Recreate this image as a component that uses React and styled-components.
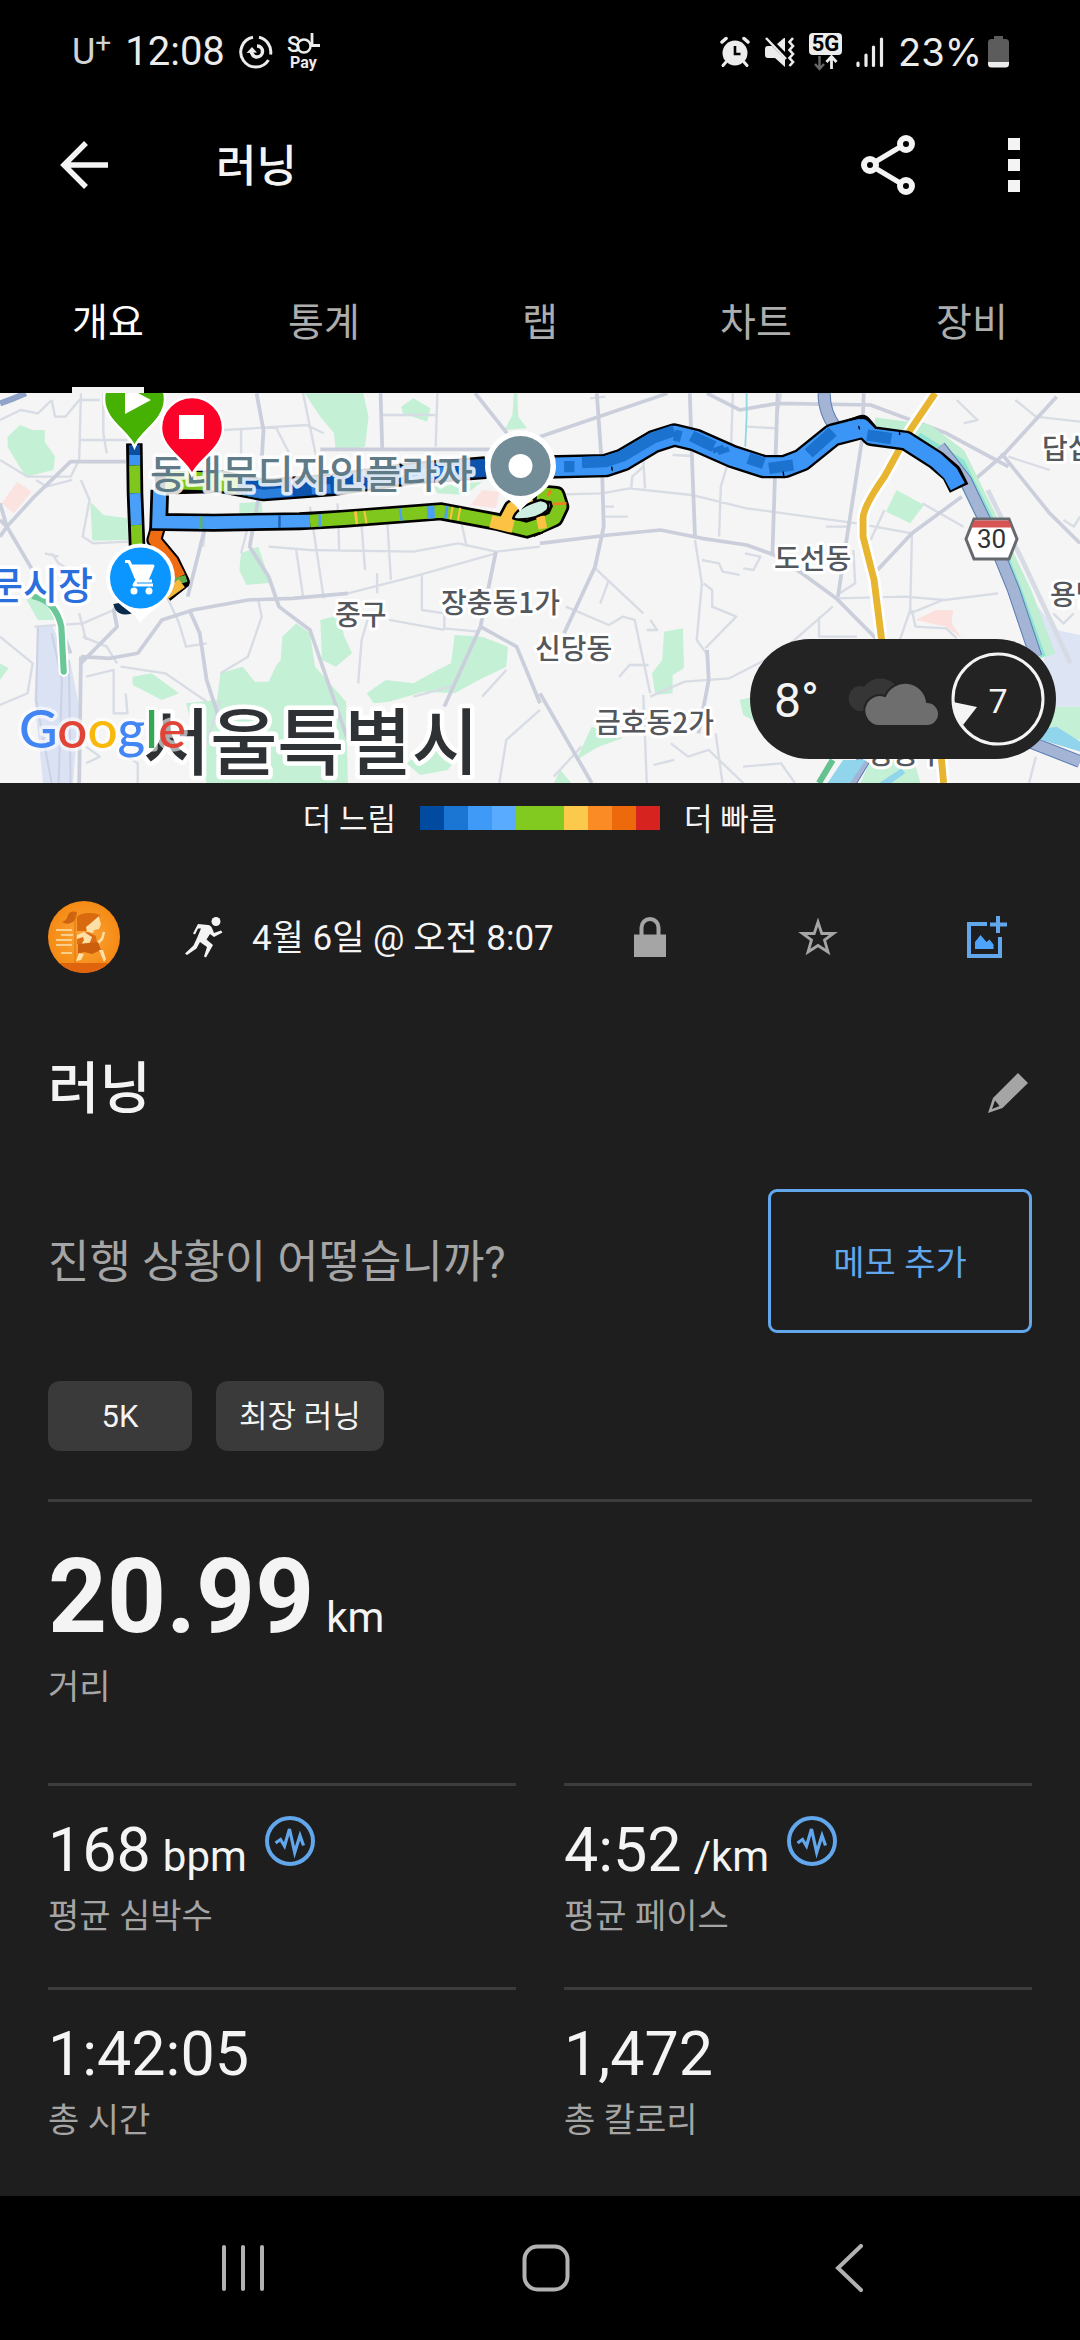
import React from "react";
import styled, { createGlobalStyle } from "styled-components";

const color = {
  bg: "#1e1e1e",
  black: "#000000",
  text: "#f4f4f4",
  muted: "#a5a5a5",
  line: "#3c3c3c",
  chip: "#3a3a3a",
  blue: "#62a6ec",
};

const GlobalStyle = createGlobalStyle`
  *, *::before, *::after { box-sizing: border-box; }
  body {
    margin: 0;
    background: ${color.bg};
    color: ${color.text};
    font-family: Roboto, "Noto Sans CJK KR", sans-serif;
    font-size: 36px;
  }
  button { font: inherit; color: inherit; background: none; border: 0; padding: 0; margin: 0; cursor: pointer; }
  h1, h2, p, dl, dt, dd, ul { margin: 0; padding: 0; font-weight: inherit; }
  svg { display: block; flex: none; }
`;

const Screen = styled.div`
  display: flex;
  flex-direction: column;
  min-height: 100vh;
`;

const TopArea = styled.header`
  background: ${color.black};
`;

/* ---------- status bar ---------- */

const StatusBar = styled.div`
  display: flex;
  align-items: center;
  justify-content: space-between;
  height: 104px;
  padding: 0 71px 0 72px;
  color: #ececec;
  font-size: 40px;
  line-height: 48px;
`;

const StatusGroup = styled.div`
  display: flex;
  align-items: center;
  gap: 14px;
`;

const Carrier = styled.span`
  color: #d2d2d2;
  font-size: 36px;

  sup {
    font-size: 28px;
    line-height: 1;
    vertical-align: 12px;
  }
`;

const BatteryGroup = styled.span`
  display: flex;
  align-items: center;
  gap: 6px;
  font-family: Inter, Roboto, sans-serif;
  font-size: 38px;
`;

/* ---------- app bar and tabs ---------- */

const AppBar = styled.div`
  display: flex;
  align-items: center;
  height: 122px;
  padding: 0 36px 0 48px;
`;

const IconButton = styled.button`
  display: flex;
  align-items: center;
  justify-content: center;
  width: ${(p) => p.$width || 72}px;
  height: 72px;
`;

const AppTitle = styled.h1`
  flex: 1;
  margin-left: 96px;
  padding-top: 4px;
  font-size: 44px;
  font-weight: 500;
  line-height: 48px;
`;

const AppActions = styled.div`
  display: flex;
  gap: 60px;
`;

const Tabs = styled.nav`
  display: grid;
  grid-template-columns: repeat(5, 1fr);
  padding-top: 73px;
`;

const Tab = styled.button`
  display: flex;
  justify-content: center;
  color: ${(p) => (p.$active ? "#ffffff" : "#adadad")};
  font-size: 39px;
  line-height: 48px;

  span {
    min-width: 72px;
    padding-bottom: 40px;
    border-bottom: 6px solid ${(p) => (p.$active ? "#f4f4f4" : "transparent")};
  }
`;

/* ---------- map ---------- */

const MapPanel = styled.section`
  position: relative;
  height: 390px;
  overflow: hidden;
  background: #f5f5f5;

  > svg { width: 100%; height: 100%; }
`;

const WeatherPill = styled.div`
  position: absolute;
  right: 24px;
  bottom: 24px;
  display: flex;
  align-items: center;
  width: 306px;
  height: 120px;
  padding: 0 11px 0 24px;
  border-radius: 60px;
  background: #232323;
`;

const Temperature = styled.span`
  flex: 1;
  padding-top: 4px;
  font-size: 48px;
  line-height: 56px;
`;

const Wind = styled.span`
  position: relative;
  display: flex;
  align-items: center;
  justify-content: center;
  width: 94px;
  height: 94px;
  margin-left: 12px;
  padding-top: 4px;
  font-size: 34px;

  svg { position: absolute; inset: 0; }
`;

/* ---------- legend ---------- */

const Legend = styled.div`
  display: flex;
  align-items: center;
  justify-content: center;
  gap: 24px;
  height: 70px;
  font-size: 31px;
  line-height: 40px;

  span { padding-top: 4px; }
`;

const Scale = styled.div`
  display: flex;
`;

const Swatch = styled.i`
  width: 24px;
  height: 24px;
  background: ${(p) => p.$color};
`;

/* ---------- activity ---------- */

const Content = styled.main`
  display: flex;
  flex-direction: column;
  padding: 48px 48px 0;
`;

const ActivityRow = styled.div`
  display: flex;
  align-items: center;
  height: 72px;
  margin-right: -38px;
`;

const ActivityMeta = styled.div`
  display: flex;
  flex: 1;
  align-items: center;
  gap: 28px;
  margin-left: 64px;
  font-size: 35px;
  line-height: 48px;
  white-space: nowrap;

  span { padding-top: 4px; }
`;

const TitleRow = styled.div`
  display: flex;
  align-items: center;
  justify-content: space-between;
  height: 144px;
  margin: 48px 0 24px;
`;

const Title = styled.h2`
  padding-bottom: 8px;
  font-size: 56px;
  font-weight: 500;
  line-height: 64px;
`;

const NoteRow = styled.div`
  display: flex;
  align-items: center;
  justify-content: space-between;
`;

const Question = styled.p`
  padding-top: 4px;
  color: ${color.muted};
  font-size: 45px;
  line-height: 56px;
`;

const NoteButton = styled.button`
  width: 264px;
  height: 144px;
  padding-top: 4px;
  border: 3px solid ${color.blue};
  border-radius: 9px;
  color: ${color.blue};
  font-size: 34px;
  line-height: 40px;
`;

const Chips = styled.ul`
  display: flex;
  gap: 24px;
  padding: 48px 0;
  list-style: none;
`;

const Chip = styled.li`
  min-width: 144px;
  padding: 16px 23px 14px;
  border-radius: 12px;
  background: ${color.chip};
  font-size: 31px;
  line-height: 40px;
  text-align: center;
`;

/* ---------- metrics ---------- */

const Metrics = styled.dl`
  display: grid;
  grid-template-columns: 1fr 1fr;
  column-gap: 48px;
`;

const Metric = styled.div`
  display: flex;
  flex-direction: column-reverse;
  grid-column: ${(p) => (p.$hero ? "1 / -1" : "auto")};
  gap: 10px;
  padding: ${(p) => (p.$hero ? "35px 0 76px" : "28px 0 51px")};
  border-top: 3px solid ${color.line};
`;

const MetricLabel = styled.dt`
  color: ${color.muted};
  font-size: 34px;
  line-height: 40px;
`;

const MetricValue = styled.dd`
  display: flex;
  align-items: flex-start;
  gap: 18px;
  font-size: ${(p) => (p.$hero ? 103 : 61)}px;
  font-weight: ${(p) => (p.$hero ? 700 : 400)};
  line-height: ${(p) => (p.$hero ? 120 : 72)}px;
`;

const Unit = styled.span`
  margin-left: 12px;
  font-size: 42px;
  font-weight: 400;
  line-height: 1;
`;

/* ---------- system navigation ---------- */

const SystemNav = styled.nav`
  display: grid;
  grid-template-columns: repeat(3, 1fr);
  align-items: center;
  justify-items: center;
  height: 144px;
  margin-top: auto;
  padding: 0 80px 0 92px;
  background: ${color.black};
`;

/* ---------- status icons ---------- */

const SwirlIcon = () => (
  <svg width="34" height="34" viewBox="0 0 34 34" fill="none" stroke="#ececec">
    <path d="M20 2.3A15 15 0 0 1 31.6 19.500M29.500 25A15 15 0 1 1 14 2.300" strokeWidth="3" />
    <path d="M12 16c1 4 3 6 6 6s5.500-2.500 5.500-5.500-2-5.500-5.500-5.500" strokeWidth="3.500" />
    <path d="M7.500 18l5.500-6 5 5.500z" fill="#ececec" stroke="none" />
  </svg>
);

const SolIcon = () => (
  <svg width="34" height="42" viewBox="0 0 34 42" fill="#ececec" fontFamily="Roboto, sans-serif">
    <text x="0" y="21" fontSize="22" fontWeight="500">S</text>
    <circle cx="17" cy="15" r="6.500" fill="none" stroke="#ececec" strokeWidth="2.400" />
    <path d="M25 2v12.500H33" fill="none" stroke="#ececec" strokeWidth="2.800" />
    <text x="3" y="37" fontSize="16" fontWeight="700">Pay</text>
  </svg>
);

const AlarmIcon = () => (
  <svg width="30" height="32" viewBox="0 0 30 32" fill="none" stroke="#ececec" strokeLinecap="round">
    <circle cx="15" cy="17" r="12.500" fill="#ececec" stroke="none" />
    <path d="M2 6l4-3.500M28 6l-4-3.500" strokeWidth="3.500" />
    <path d="M6 26l-3 3.500M24 26l3 3.500" strokeWidth="3" />
    <path d="M15 10v8h5.500" stroke="#000" strokeWidth="2.600" strokeLinecap="butt" />
  </svg>
);

const MuteIcon = () => (
  <svg width="31" height="32" viewBox="0 0 31 32" fill="#ececec">
    <path d="M1 13c0-2 1-3 3-3h4l13 13v8L11 22H4c-2 0-3-1-3-3zM13 8l7-6h1v14z" />
    <path d="M2 2l20 21" stroke="#ececec" strokeWidth="2.500" />
    <path d="M29 2l-3.500 4 3.500 4-3.500 4 3.500 4-3.500 4 3.500 4-3.500 4" fill="none" stroke="#ececec" strokeWidth="2.600" />
  </svg>
);

const NetworkIcon = () => (
  <svg width="33" height="40" viewBox="0 0 33 40" fill="none">
    <rect x="0" y="1" width="33" height="22" rx="4" fill="#ececec" />
    <text x="16.500" y="18.500" fill="#000" fontFamily="Roboto, sans-serif" fontSize="22" fontWeight="700" textAnchor="middle">5G</text>
    <path d="M10.500 24v12M6 32l4.500 5 4.500-5" stroke="#666" strokeWidth="2.500" />
    <path d="M22.500 37V25M17.500 30l5-5.500 5 5.500" stroke="#ececec" strokeWidth="2.800" />
  </svg>
);

const SignalIcon = () => (
  <svg width="28" height="32" viewBox="0 0 28 32" stroke="#ececec" strokeWidth="3.200" strokeLinecap="round">
    <path d="M2 27v2.500M10 19v10.500M17.500 11v18.500M25.500 3v26.500" />
  </svg>
);

const BatteryIcon = () => (
  <svg width="21" height="32" viewBox="0 0 21 32">
    <path d="M6 0h9v3h2.500A3.500 3.500 0 0 1 21 6.500V26H0V6.500A3.500 3.500 0 0 1 3.500 3H6z" fill="#5c5c5c" />
    <path d="M0 26h21v2a3.500 3.500 0 0 1-3.500 3.500h-14A3.500 3.500 0 0 1 0 28z" fill="#ececec" />
  </svg>
);

/* ---------- action icons ---------- */

const BackArrowIcon = () => (
  <svg width="48" height="48" viewBox="0 0 48 48" fill="none" stroke={color.text} strokeWidth="5.500">
    <path d="M48 24H4M26 2L4 24l22 22" />
  </svg>
);

const ShareIcon = () => (
  <svg width="56" height="62" viewBox="0 0 56 62" fill="none" stroke={color.text}>
    <path d="M10 31L46 9.500M10 31l36 21.500" strokeWidth="5" />
    <g fill="#000" strokeWidth="6">
      <circle cx="10" cy="31" r="6" />
      <circle cx="46" cy="10" r="6" />
      <circle cx="46" cy="52" r="6" />
    </g>
  </svg>
);

const MoreIcon = () => (
  <svg width="12" height="54" viewBox="0 0 12 54" fill={color.text}>
    <path d="M0 0h12v12H0zM0 21h12v12H0zM0 42h12v12H0z" />
  </svg>
);

const Avatar = () => (
  <svg width="72" height="72" viewBox="0 0 72 72" role="img" aria-label="프로필">
    <defs>
      <radialGradient id="avatarGlow" cx="50%" cy="50%" r="50%">
        <stop offset="0" stopColor="#fba63a" />
        <stop offset="1" stopColor="#f58a14" />
      </radialGradient>
      <clipPath id="avatarClip"><circle cx="36" cy="36" r="36" /></clipPath>
    </defs>
    <g clipPath="url(#avatarClip)">
      <rect width="72" height="72" fill="url(#avatarGlow)" />
      <rect y="62" width="72" height="10" fill="#e0640e" />
      <path d="M8 29h16M13 34h12M8 39h16M8 44h16M13 52h11" stroke="#fdd08a" strokeWidth="2" />
      <path d="M29 30V16c4-5 17-5 23-2l-1 5-8 3-3 8z" fill="#d96a10" />
      <path d="M29 12c-3-3-8-1-9 2-1 4-3 6-6 7 5 3 11 2 14-4z" fill="#cf6410" />
      <path d="M43 22l8-7 1 5 1 3-2 5-5 1-1 3-6-1-1-5z" fill="#fde0a6" />
      <path d="M29 34l11-3 8 4 1 7-10 3-10-2z" fill="#dd6c12" />
      <path d="M29 34l7-3 8 5-3 8-5 2-3-2 3-5-1-3-6 2z" fill="#fde0a6" />
      <path d="M50 42l4-4 2-7" stroke="#fde0a6" strokeWidth="2.500" fill="none" />
      <path d="M30 43l20-2 3 8-9 4-8-2-6 2z" fill="#cc5f0d" />
      <path d="M31 52l5 1-3 6-5 1zM51 49l4 0 3 9-2 3z" fill="#fde0a6" />
      <path d="M27 13v50" stroke="#dc7415" strokeWidth="1" />
    </g>
  </svg>
);

const RunnerIcon = () => (
  <svg width="40" height="42" viewBox="0 0 40 42" fill={color.text}>
    <circle cx="32" cy="5.500" r="4.500" />
    <path d="M14 8l10 1c2 .3 3 1.300 4 3l2 5 7-2.500 1.500 2L30 21l-4-3-3.500 5.500L29 29l-7 12.500-2-1L23 31l-7-5-3.500 6.500L3 39l-2-1.500 8.500-8L13 22l4-9.500h-3l-3 6-2-1z" />
  </svg>
);

const LockIcon = () => (
  <svg width="32" height="42" viewBox="0 0 32 42" fill={color.muted}>
    <path d="M0 18.500h32V41H0z" />
    <path d="M7.500 20v-8.500a8.500 8.500 0 0 1 17 0V20" fill="none" stroke={color.muted} strokeWidth="4" />
  </svg>
);

const StarIcon = () => (
  <svg width="40" height="40" viewBox="0 0 40 40" fill="none" stroke={color.muted} strokeWidth="2.800">
    <path d="M20 5l3.800 11.500H35.500L26.500 23l3.500 12L20 28.500 10 35l3.500-12L4.500 16.500h11.700z" />
  </svg>
);

const AddPhotoIcon = () => (
  <svg width="42" height="42" viewBox="0 0 42 42" fill="none" stroke={color.blue} strokeWidth="4">
    <path d="M22 8H4v32h31V21" />
    <path d="M33 0v17M25 8.500h17" />
    <path d="M10 33v-7l5.500-7 6 7 3-2.500 4 5V33z" fill="#4ea3fb" stroke="none" />
  </svg>
);

const PencilIcon = () => (
  <svg width="40" height="42" viewBox="0 0 40 42" fill={color.muted}>
    <path fillRule="evenodd" d="M30 1l10 10-25.500 25L0 41l5-15zM7 28.500L4 37l7.500-3z" />
  </svg>
);

const PulseIcon = () => (
  <svg width="50" height="54" viewBox="0 0 50 54" fill="none" stroke={color.blue}>
    <circle cx="25" cy="27" r="23" strokeWidth="4" />
    <path d="M10.500 29l5-3.500L19.500 32l5-17 5.200 23.500L35 21.500l3.500 10" strokeWidth="3.200" />
  </svg>
);

const RecentsIcon = () => (
  <svg width="44" height="48" viewBox="0 0 44 48" stroke="#b2b2b2" strokeWidth="4" strokeLinecap="round">
    <path d="M3 3v42M22 3v42M41 3v42" />
  </svg>
);

const HomeIcon = () => (
  <svg width="48" height="48" viewBox="0 0 48 48" fill="none" stroke="#b2b2b2" strokeWidth="4">
    <rect x="2.500" y="2.500" width="43" height="43" rx="13" />
  </svg>
);

const NavBackIcon = () => (
  <svg width="28" height="48" viewBox="0 0 28 48" fill="none" stroke="#b2b2b2" strokeWidth="4" strokeLinecap="round">
    <path d="M26 2L3 24l23 22" />
  </svg>
);

const CloudsIcon = () => (
  <svg width="94" height="53" viewBox="0 0 94 53">
    <path d="M13 38a13 13 0 0 1 0-25c2 0 4 0 6 1a20 20 0 0 1 34 2L40 38z" fill="#363636" />
    <path d="M33 53a15.500 15.500 0 1 1 7-30 22 22 0 0 1 42 6 12 12 0 0 1 0 24z" fill="#6e6e6e" stroke="#232323" strokeWidth="2" />
  </svg>
);

const WindDial = () => (
  <svg width="94" height="94" viewBox="0 0 94 94">
    <circle cx="47" cy="47" r="45" fill="none" stroke={color.text} strokeWidth="3" />
    <path d="M2 50l24 5-14 18C6 66 3 58 2 50z" fill={color.text} />
  </svg>
);

/* ---------- map drawing ---------- */

const parksWest =
  "M22 170L58 135 95 150 130 150 130 185 160 230 155 270 75 290 45 240 22 200z" +
  "M262 365L300 405 370 415 372 480 268 482z" +
  "M885 40L1055 40 1070 110 1060 200 975 215 970 160 930 110z" +
  "M1165 80L1200 55 1250 85 1240 125 1170 100z" +
  "M1492 40L1502 40 1505 110 1530 145 1465 150 1488 105z" +
  "M695 370L760 365 765 440 695 430z" +
  "M700 520L750 500 770 560 790 608 715 615 695 570z" +
  "M930 720L985 705 1000 770 1022 820 975 860 935 840z" +
  "M540 970L630 960 640 880 705 860 740 905 780 905 800 860 815 840 820 770 860 730 900 760 915 860 1005 965 1010 1209 600 1209 570 1090z" +
  "M385 890L440 880 520 940 470 960 385 915z" +
  "M1065 940L1120 900 1200 910 1270 870 1310 850 1320 765 1400 770 1475 800 1470 860 1390 900 1320 940 1230 935 1130 965 1085 970z" +
  "M1180 1150L1250 1100 1330 1130 1300 1170 1220 1185z" +
  "M0 850L25 865 0 900zM1260 320L1400 305 1350 345 1270 340zM50 610L140 660 160 720 110 720z";

const majorWest =
  "M0 420L20 440 95 355 205 245 365 245M0 370L20 440 100 580M20 440L0 470" +
  "M745 40L765 150 755 330 725 500 780 590 810 680 900 750 960 930 1010 1080" +
  "M596 440L545 650M235 850L340 740 330 690 400 610M235 830L230 1209" +
  "M235 830L320 835 400 820 470 720 560 690 720 660 850 655 1010 640" +
  "M550 690L580 760 600 900 650 1060M1395 740L1500 800 1568 970" +
  "M930 208L1430 208M1105 40L1110 210M1440 515L1395 740 1290 980" +
  "M1380 40L1480 170M205 820L140 640";

const minorWest =
  "M235 40L230 240M150 60L160 110 190 110 230 60 290 60M230 180L370 180M300 40L300 160 310 220M470 170L650 150 890 135 940 160" +
  "M800 140L850 240M880 40L920 240M1110 105L1270 105M1270 40L1265 200M0 120L60 90 110 100 150 60" +
  "M0 240L80 290 205 290 230 240M235 300L260 360 240 470 270 490 372 485M105 300L135 320 210 300" +
  "M780 500L900 510 1200 515 1330 490 1440 515 1568 500M1010 640L1200 590 1440 520M900 380L940 655M1050 440L1060 570M1125 430L1135 600M980 370L985 510" +
  "M1340 430L1355 500M1225 580L1225 690 1290 700 1290 745 1390 755M1130 720L1290 750M1095 580L1095 640M1040 910L1050 780 1070 710" +
  "M0 975L80 940 95 850 0 770M250 890L330 870 330 1000 370 1000 365 940M350 860L480 880 600 965M370 1130L400 1150 400 1209M240 770L310 800 340 850" +
  "M150 520L170 550 235 590M100 740L240 730 330 690M230 700L250 780M520 730L540 800 600 790M640 880L720 830 760 710 750 660" +
  "M1200 950L1310 920M1470 870L1400 950M1450 1209L1470 1080 1568 990M600 400L590 500M720 440L700 520M860 510L880 650M640 960L590 1120" +
  "M250 1100L290 1130 250 1150M130 520L170 530M480 640L520 730M600 120L610 200M700 150L700 240";

const parksEast =
  "M1035 330L1115 375 1075 430 1005 395z" +
  "M360 755L415 745 418 865 385 885 385 940 335 945 325 880 355 840z" +
  "M105 1140L150 1040 240 1075 170 1100z" +
  "M580 960L640 945 650 1040 590 1005z" +
  "M1490 980L1568 980 1568 1080 1460 1060z" +
  "M1555 800L1568 780 1568 930zM40 1209L60 1170 90 1209zM930 1209L960 1140 1085 1140 1105 1209z";

const majorEast =
  "M0 170L370 40M165 40L180 260 185 440 160 560 70 760M0 490L200 465 350 450 470 475 600 495 680 525 760 580 860 655 980 780" +
  "M435 40L440 200 450 470M690 40L675 520M940 40L935 180 890 480 865 650M0 940L150 1209M485 810L490 900 460 1060" +
  "M485 40L580 90 690 70 960 75 1180 160 1360 260M1250 310L1350 220 1500 50M1340 220L1480 400 1568 490M1225 350L1080 460 980 570";

const minorEast =
  "M145 55L190 50M0 345L180 340 260 325 440 345 600 385 920 430 1080 460M190 410L255 410M185 380L215 380" +
  "M300 240L305 325M265 325L268 290 300 260M520 470L525 320 560 200M600 140L690 145M385 225L440 228" +
  "M560 40L555 200M155 560L300 700M200 600L175 670M75 680L200 735 240 710 275 720 320 940M320 720L340 750 310 750" +
  "M470 540L520 550 530 575 580 585M450 480L470 610 455 780 490 830M475 610L500 630 500 680 570 710 480 805" +
  "M595 520L640 530 620 570 590 565M230 890L260 855 315 855M320 950L420 905 550 895 700 815 850 680M300 945L310 1209" +
  "M380 1090L430 1130 490 1110 590 1209M510 1060L530 1209M590 1160L700 1150 740 1209M40 1190L120 1100M390 1140L330 1155" +
  "M700 40L690 100M1210 60L1270 120 1230 130M1380 60L1440 110 1568 125M1360 230L1480 270M1110 370L1230 440M1080 460L1075 690 1045 780" +
  "M860 655L1060 650 1175 660 1330 640M1075 700L1170 660M810 710L810 770 920 770M1000 390L960 480M830 440L895 440M910 510L915 610 870 640" +
  "M1080 690L1090 740 1180 745 1210 775M1520 420L1550 440 1568 410M1490 700L1520 730 1550 700M1440 1130L1420 1209M1480 1110L1568 1140";

const CityMap = () => (
  <svg viewBox="0 0 1080 390" preserveAspectRatio="xMidYMid slice" role="img" aria-label="러닝 경로 지도" fontFamily='"Noto Sans CJK KR", sans-serif'>
    <rect width="1080" height="390" fill="#f5f5f5" />

    {/* western half */}
    <g transform="translate(0 -13) scale(.3444 .3333)" fill="none" strokeLinejoin="round">
      <path d={parksWest} fill="#c4f0d5" />
      <path d="M50 305L92 335 40 400 5 370zM1400 330L1450 335 1440 385 1365 375z" fill="#fbe3e0" />
      <path d="M110 740L150 735 205 850 230 980 212 1209 125 1209 100 960z" fill="#dbe2f3" />
      <path d="M110 740L105 960 150 1209M150 760L180 900 170 1209M200 840L205 1209" stroke="#ccd2e3" strokeWidth="6" />
      <path d={minorWest} stroke="#d8dce4" strokeWidth="7" />
      <path d={majorWest} stroke="#cbcfdc" strokeWidth="11" />
      <path d="M0 70L40 55 75 40" stroke="#90a3c8" strokeWidth="18" />
      <path d="M100 640Q165 660 178 740L185 875" stroke="#fff" strokeWidth="30" strokeLinecap="round" />
      <path d="M100 650Q162 665 178 740L185 875" stroke="#6cc798" strokeWidth="18" strokeLinecap="round" />
    </g>

    {/* eastern half */}
    <g transform="translate(540 -13) scale(.3444 .3333)" fill="none" strokeLinejoin="round">
      <path d={parksEast} fill="#c4f0d5" />
      <path d="M1090 720L1150 690 1200 690 1195 730 1225 775 1180 740z" fill="#fbe0de" />
      <path d="M1430 660L1500 750 1568 765 1568 980 1490 980z" fill="#dde4f4" />
      <path d={minorEast} stroke="#d8dce4" strokeWidth="7" />
      <path d={majorEast} stroke="#cbcfdc" strokeWidth="11" />
      <path d="M600 40L600 110 596 200" stroke="#8fd8e0" strokeWidth="5" />
      <path d="M970 140L1120 160 1210 230 1300 420 1400 640 1470 830" stroke="#bfeed2" strokeWidth="56" />
      <path d="M1300 330L1400 540 1500 760 1540 850" stroke="#d7dbe4" strokeWidth="14" />
      <path d="M1100 165L1225 245 1310 420 1395 640 1460 830" stroke="#8fe3d5" strokeWidth="16" />
      <path d="M825 40Q825 100 860 145M1160 200L1235 300 1300 440 1375 630 1440 830M1420 1085L1568 1145M940 1140L900 1209" stroke="#5c7db5" strokeWidth="38" />
      <path d="M825 40Q825 100 860 145M1160 200L1235 300 1300 440 1375 630 1440 830M1420 1085L1568 1145M940 1140L900 1209" stroke="#a3b4d4" strokeWidth="32" />
      <path d="M1440 1050L1500 1040 1568 1085 1568 1115 1440 1075zM835 1209L880 1140 945 1140 900 1209zM985 1209L1050 1165 1060 1180 1020 1209z" fill="#90d5ec" />
      <path d="M1145 40L1075 150 1000 290Q935 385 938 420L938 470 970 600 992 780M1165 1130L1172 1209" stroke="#fff" strokeWidth="36" />
      <path d="M1147 40L1075 150 1000 290Q935 385 938 420L938 470 970 600 992 780M1165 1130L1172 1209" stroke="#e8b531" strokeWidth="20" />
      <path d="M850 1140L810 1209" stroke="#65c18f" strokeWidth="18" />
    </g>

    {/* recorded route */}
    <g transform="translate(0 -13) scale(.3444 .3333)" fill="none" strokeLinejoin="round">
      <path d="M450 310L640 305 765 330 960 315 1200 280 1410 263" stroke="#000" strokeWidth="68" />
      <path d="M480 300L640 305 765 330" stroke="#7fc71d" strokeWidth="54" />
      <path d="M690 315L765 330 960 315 1200 280 1410 263" stroke="#0b53ad" strokeWidth="54" />
      <path d="M720 335L765 342 850 335M905 330L960 325M1180 285L1320 270" stroke="#2b80de" strokeWidth="26" />

      <path d="M390 190L392 340 398 500" stroke="#000" strokeWidth="48" />
      <path d="M390 195L391 225" stroke="#0b4fa5" strokeWidth="32" />
      <path d="M391 225L391 256" stroke="#3b93f2" strokeWidth="32" />
      <path d="M391 256L392 340" stroke="#7fc71d" strokeWidth="32" />
      <path d="M392 340L396 435" stroke="#4a9ff8" strokeWidth="32" />
      <path d="M396 435L398 500" stroke="#7fc71d" strokeWidth="32" />

      <path d="M340 670Q345 700 380 690" stroke="#0a2a4a" strokeWidth="22" />
      <path d="M462 430L448 480 500 545 528 605 480 645" stroke="#000" strokeWidth="46" />
      <path d="M462 430L448 480 500 545 522 590" stroke="#f06c13" strokeWidth="34" />
      <path d="M522 590L528 610" stroke="#5fae4a" strokeWidth="34" />
      <path d="M528 610L480 645" stroke="#f5b83c" strokeWidth="30" />

      <path d="M464 330L461 426 620 428 870 424 1000 416 1280 394 1440 425 1530 448 1568 435" stroke="#000" strokeWidth="54" strokeLinejoin="miter" />
      <path d="M1460 440L1488 385 1560 340 1615 345 1626 380 1610 415 1540 446" stroke="#000" strokeWidth="54" />
      <path d="M464 330L461 426 620 428 900 423" stroke="#4a9ff8" strokeWidth="38" strokeLinejoin="miter" />
      <path d="M900 423L1000 416 1280 394 1440 425 1530 448 1568 435" stroke="#7fc71d" strokeWidth="38" />
      <path d="M1460 440L1488 385 1540 350" stroke="#fbc244" strokeWidth="38" />
      <path d="M1560 340L1615 345 1626 380 1610 415 1560 440" stroke="#7fc71d" strokeWidth="38" />
      <path d="M1425 424L1490 440M1560 430L1585 425M1030 414L1038 413M1058 412L1064 411M1308 399L1314 400M1330 402L1336 403" stroke="#fbc244" strokeWidth="38" />
      <path d="M578 428L588 428" stroke="#5cb36b" strokeWidth="38" />
      <path d="M808 425L815 425" stroke="#1b64b8" strokeWidth="38" />
      <path d="M925 421L932 421M1160 404L1167 403M1240 397L1262 396M1292 396L1300 397" stroke="#4a9ff8" strokeWidth="38" />
      <path d="M1605 372L1645 370M1590 348L1600 330" stroke="#f47c20" strokeWidth="8" />
      <path d="M1490 415Q1500 380 1570 360Q1600 365 1590 390Q1560 420 1500 418z" fill="#cfeee2" stroke="#000" strokeWidth="7" />
    </g>
    <g transform="translate(540 -13) scale(.3444 .3333)" fill="none" strokeLinejoin="round">
      <path d="M20 261L190 257 240 240 330 185 390 165 450 180 560 230 650 260 710 260 760 240 850 165 930 143" stroke="#000" strokeWidth="70" />
      <path d="M900 148L935 135 962 168 1062 182 1150 240 1195 280 1217 325" stroke="#000" strokeWidth="60" />
      <path d="M20 261L190 257 240 240 330 185 390 165 450 180 560 230 650 260 710 260 760 240 850 165 935 143" stroke="#3b95f6" strokeWidth="56" />
      <path d="M900 148L935 140 962 168 1062 182 1150 240 1192 280 1213 320" stroke="#3b95f6" strokeWidth="46" />
      <path d="M70 260L100 260M122 248L190 245 240 228 330 173 390 152M390 165L410 170M440 168L505 200M515 200L520 215M530 205L535 220M605 235L650 250M665 265L735 255M780 220L850 155M950 165L1020 176" stroke="#1b72cf" strokeWidth="34" />
      <path d="M208 260L210 272M706 275L708 290M925 138L928 148M1044 155L1044 165" stroke="#000" strokeWidth="4" />
    </g>

    {/* place names */}
    <g fill="#54575b" stroke="#fff" strokeWidth="6" strokeLinejoin="round" paintOrder="stroke" fontSize="28" fontWeight="500">
      <text x="335" y="232">중구</text>
      <text x="441" y="220">장충동1가</text>
      <text x="535" y="266">신당동</text>
      <text x="774" y="176">도선동</text>
      <text x="595" y="340">금호동2가</text>
      <text x="1042" y="66">답십리</text>
      <text x="1050" y="212">용답동</text>
      <text x="867" y="371">성동구</text>
    </g>
    <text x="150" y="95" fontSize="39" fontWeight="500" fill="#607b88" stroke="#fff" strokeOpacity=".85" strokeWidth="7" strokeLinejoin="round" paintOrder="stroke">동대문디자인플라자</text>
    <text x="93" y="206" fontSize="38" fontWeight="500" fill="#2a6fdc" stroke="#fff" strokeWidth="7" strokeLinejoin="round" paintOrder="stroke" textAnchor="end">문시장</text>
    <text x="143" y="376" fontSize="73" fontWeight="500" fill="#2f3235" stroke="#fff" strokeWidth="9" strokeLinejoin="round" paintOrder="stroke">서울특별시</text>

    <text x="19" y="355" fontFamily="Lato, sans-serif" fontSize="53" fontWeight="500" stroke="#fff" strokeOpacity=".6" strokeWidth="7" strokeLinejoin="round" paintOrder="stroke">
      <tspan fill="#4285f4">G</tspan><tspan fill="#e04437">o</tspan><tspan fill="#f8b90c">o</tspan><tspan fill="#4285f4">g</tspan><tspan fill="#34a853">l</tspan><tspan fill="#e04437">e</tspan>
    </text>

    {/* route shield */}
    <path d="M974 126h35l8 20-8 20h-35l-8-20z" fill="#fff" stroke="#66696d" strokeWidth="3" />
    <path d="M974.500 127.500h34l3.500 7h-41z" fill="#d65454" />
    <text x="991.500" y="155" fontFamily="Roboto, sans-serif" fontSize="26" fill="#2f3235" textAnchor="middle">30</text>

    {/* pins */}
    <path d="M134.500 54C128 38 104 28 104 6a30.500 30.500 0 0 1 61 0c0 22-24 32-30.500 48z" fill="#47b103" stroke="#fff" strokeWidth="2.500" />
    <path d="M125-7l26 14-26 14z" fill="#fff" />
    <path d="M192 82C185 66 161 56 161 35a31 31 0 0 1 62 0c0 21-24 31-31 47z" fill="#fb0228" stroke="#fff" strokeWidth="2.500" />
    <path d="M179 22h25v24h-25z" fill="#fff" />
    <path d="M520 119C515 106 485 98 485 73a35.500 35.500 0 0 1 71 0c0 25-30 33-36 46z" fill="#fff" />
    <circle cx="520.500" cy="73" r="30" fill="#738d98" />
    <circle cx="520.500" cy="73" r="12" fill="#fff" />
    <path d="M140.500 231C136 218 106 210 106 185a34.500 34.500 0 0 1 69 0c0 25-30 33-34.500 46z" fill="#fff" />
    <circle cx="140.500" cy="185" r="30.500" fill="#0a95ff" />
    <path d="M125 168.500h4l9 19.500h14M131 173h22l-5 12h-12zM137 187l-3 5h19" fill="none" stroke="#fff" strokeWidth="3" strokeLinejoin="round" />
    <path d="M131 173h22l-5 12h-12z" fill="#fff" />
    <circle cx="134" cy="198" r="3.500" fill="#fff" />
    <circle cx="149" cy="198" r="3.500" fill="#fff" />
  </svg>
);

/* ---------- page ---------- */

const tabs = ["개요", "통계", "랩", "차트", "장비"];

const paceColors = [
  "#004a9f", "#1a76d2", "#3f99f6", "#58abff", "#82ca1f",
  "#82ca1f", "#fbc94b", "#fb8b25", "#ec6a0c", "#d6231f",
];

const metrics = [
  { label: "거리", value: "20.99", unit: "km", hero: true },
  { label: "평균 심박수", value: "168", unit: "bpm", chart: true },
  { label: "평균 페이스", value: "4:52", unit: "/km", chart: true },
  { label: "총 시간", value: "1:42:05" },
  { label: "총 칼로리", value: "1,472" },
];

export default function App() {
  return (
    <Screen>
      <GlobalStyle />
      <TopArea>
        <StatusBar>
          <StatusGroup>
            <Carrier>U<sup>+</sup></Carrier>
            <span>12:08</span>
            <SwirlIcon />
            <SolIcon />
          </StatusGroup>
          <StatusGroup>
            <AlarmIcon />
            <MuteIcon />
            <NetworkIcon />
            <SignalIcon />
            <BatteryGroup>23%<BatteryIcon /></BatteryGroup>
          </StatusGroup>
        </StatusBar>
        <AppBar>
          <IconButton aria-label="뒤로"><BackArrowIcon /></IconButton>
          <AppTitle>러닝</AppTitle>
          <AppActions>
            <IconButton aria-label="공유"><ShareIcon /></IconButton>
            <IconButton aria-label="더보기" $width={60}><MoreIcon /></IconButton>
          </AppActions>
        </AppBar>
        <Tabs>
          {tabs.map((name, i) => (
            <Tab key={name} $active={i === 0}><span>{name}</span></Tab>
          ))}
        </Tabs>
      </TopArea>

      <MapPanel>
        <CityMap />
        <WeatherPill>
          <Temperature>8°</Temperature>
          <CloudsIcon />
          <Wind><WindDial />7</Wind>
        </WeatherPill>
      </MapPanel>

      <Legend>
        <span>더 느림</span>
        <Scale>{paceColors.map((c, i) => <Swatch key={i} $color={c} />)}</Scale>
        <span>더 빠름</span>
      </Legend>

      <Content>
        <ActivityRow>
          <Avatar />
          <ActivityMeta>
            <RunnerIcon />
            <span>4월 6일 @ 오전 8:07</span>
          </ActivityMeta>
          <IconButton aria-label="비공개" $width={168}><LockIcon /></IconButton>
          <IconButton aria-label="즐겨찾기" $width={168}><StarIcon /></IconButton>
          <IconButton aria-label="사진 추가" $width={168}><AddPhotoIcon /></IconButton>
        </ActivityRow>

        <TitleRow>
          <Title>러닝</Title>
          <IconButton aria-label="이름 편집" $width={48}><PencilIcon /></IconButton>
        </TitleRow>

        <NoteRow>
          <Question>진행 상황이 어떻습니까?</Question>
          <NoteButton>메모 추가</NoteButton>
        </NoteRow>

        <Chips>
          <Chip>5K</Chip>
          <Chip>최장 러닝</Chip>
        </Chips>

        <Metrics>
          {metrics.map((m) => (
            <Metric key={m.label} $hero={m.hero}>
              <MetricLabel>{m.label}</MetricLabel>
              <MetricValue $hero={m.hero}>
                <span>{m.value}{m.unit && <Unit>{m.unit}</Unit>}</span>
                {m.chart && <PulseIcon />}
              </MetricValue>
            </Metric>
          ))}
        </Metrics>
      </Content>

      <SystemNav>
        <IconButton aria-label="최근 앱"><RecentsIcon /></IconButton>
        <IconButton aria-label="홈"><HomeIcon /></IconButton>
        <IconButton aria-label="이전"><NavBackIcon /></IconButton>
      </SystemNav>
    </Screen>
  );
}
